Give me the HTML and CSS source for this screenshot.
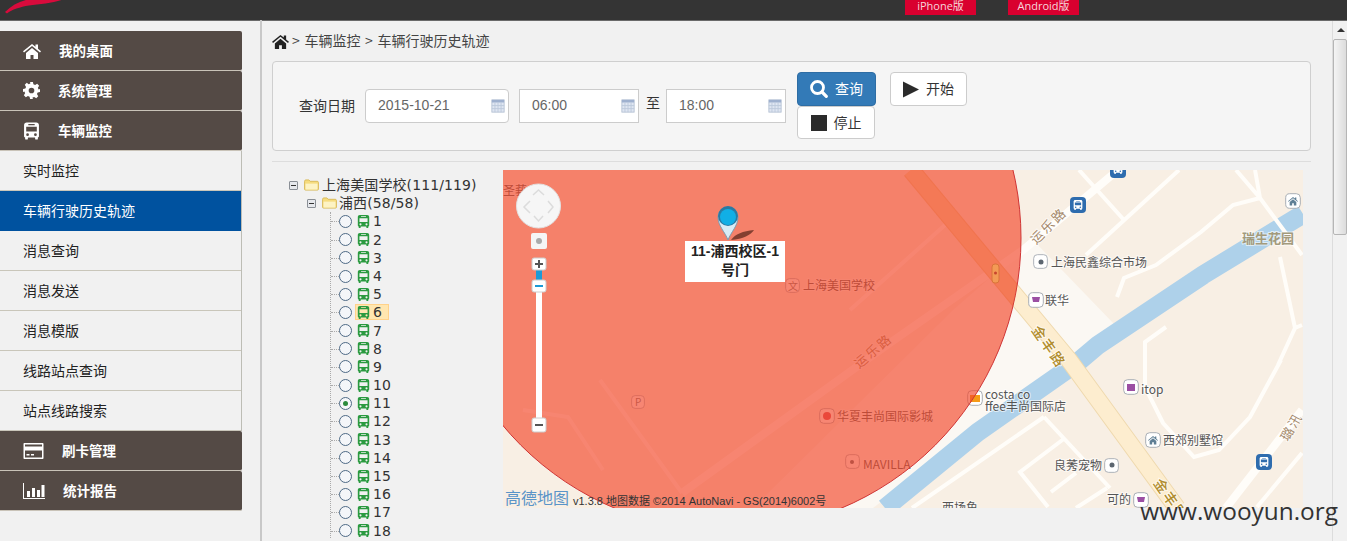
FILE: index.html
```html
<!DOCTYPE html>
<html lang="zh">
<head>
<meta charset="utf-8">
<title>车辆行驶历史轨迹</title>
<link rel="stylesheet" href="styles.css">
</head>
<body>
<svg class="defs" width="0" height="0" aria-hidden="true">
  <symbol id="bus" viewBox="0 0 16 16"><path fill="currentColor" fill-rule="evenodd" d="M3.5 0h9C14 0 15 1 15 2.500V13c0 .6-.4 1-1 1v1.200c0 .5-.3.8-.8.8h-1c-.5 0-.8-.3-.8-.8V14H4.600v1.200c0 .5-.3.8-.8.8h-1c-.5 0-.8-.3-.8-.8V14c-.6 0-1-.4-1-1V2.500C1 1 2 0 3.500 0zM5 1.500v1h6v-1zM3 4v4.500h10V4zM4.300 10.200a1.300 1.300 0 1 0 0 2.600 1.300 1.300 0 0 0 0-2.600zm7.400 0a1.300 1.300 0 1 0 0 2.600 1.300 1.300 0 0 0 0-2.600z"/></symbol>
  <symbol id="home" viewBox="0 0 18 16"><path fill="currentColor" d="M9 1 0 8.300l1 1.200L9 3l8 6.500 1-1.200-3-2.500V1.500h-2.500v2.200zM3 10v6h4.500v-4h3v4H15v-6L9 5z"/></symbol>
  <symbol id="calendar" viewBox="0 0 16 16"><rect x="1" y="1" width="14" height="14" fill="#dfe6f2" stroke="#b4bfd2"/><rect x="1" y="1" width="14" height="3" fill="#9fb1cf"/><path stroke="#bcc8da" d="M4.500 4v11M8 4v11M11.500 4v11M1 7.500h14M1 11h14"/></symbol>
  <symbol id="poi-box" viewBox="0 0 16 16"><rect x=".7" y=".7" width="14.600" height="14.600" rx="4" fill="#fff" stroke="#a9aeb5"/></symbol>
</svg>

<header class="topbar">
  <svg class="logo" viewBox="0 0 66 14" width="66" height="14"><path fill="#d80b3c" d="M5 12C12 5 20 1 30-1h34C55 3 40 4 29 5.500 20 7 12 9.500 7 13.500z"/></svg>
  <a class="app-link">iPhone版</a>
  <a class="app-link">Android版</a>
</header>

<div class="layout">
  <nav class="sidebar">
    <a class="nav-main"><svg class="ico-home"><use href="#home"/></svg><span>我的桌面</span></a>
    <a class="nav-main"><svg class="ico-gear" viewBox="0 0 24 24"><path fill="currentColor" fill-rule="evenodd" d="M10 0h4l.7 3.300 2.400 1 2.900-1.800 2.800 2.800-1.800 2.900 1 2.400L24 10v4l-3.300.7-1 2.400 1.800 2.900-2.800 2.800-2.900-1.800-2.400 1L14 24h-4l-.7-3.300-2.400-1L4 21.500l-2.800-2.800L3 15.800l-1-2.400L0 14v-4l3.300-.7 1-2.400L2.500 4l2.800-2.800L8 3l2.400-1zM12 8a4 4 0 1 0 0 8 4 4 0 0 0 0-8z"/></svg><span>系统管理</span></a>
    <a class="nav-main"><svg class="ico-bus"><use href="#bus"/></svg><span>车辆监控</span></a>
    <div class="nav-sub">
      <a class="sub-item">实时监控</a>
      <a class="sub-item is-active">车辆行驶历史轨迹</a>
      <a class="sub-item">消息查询</a>
      <a class="sub-item">消息发送</a>
      <a class="sub-item">消息模版</a>
      <a class="sub-item">线路站点查询</a>
      <a class="sub-item">站点线路搜索</a>
    </div>
    <a class="nav-main"><svg class="ico-card" viewBox="0 0 20 16"><path fill="currentColor" fill-rule="evenodd" d="M1 0h18c.6 0 1 .4 1 1v14c0 .6-.4 1-1 1H1c-.6 0-1-.4-1-1V1c0-.6.4-1 1-1zm.5 1.500v2h17v-2zm0 6v7h17v-7zM3 11h3v1.500H3zm4.500 0h3v1.500h-3z"/></svg><span>刷卡管理</span></a>
    <a class="nav-main"><svg class="ico-chart" viewBox="0 0 22 16"><path fill="currentColor" d="M0 0h1v15h21v1H0zM4 8h3v6H4zm5-3h3v9H9zm5 2h3v7h-3zm4.500-5h3v12h-3z"/></svg><span>统计报告</span></a>
  </nav>
  <div class="divider"></div>

  <main class="content">
    <div class="crumbs"><svg class="crumb-home"><use href="#home"/></svg><span>&gt; 车辆监控 &gt; 车辆行驶历史轨迹</span></div>

    <section class="query-panel">
      <label class="field-label">查询日期</label>
      <div class="date-input rounded"><span>2015-10-21</span><svg><use href="#calendar"/></svg></div>
      <div class="date-input time"><span>06:00</span><svg><use href="#calendar"/></svg></div>
      <span class="to-label">至</span>
      <div class="date-input time last"><span>18:00</span><svg><use href="#calendar"/></svg></div>
      <div class="btn-stack">
        <button class="btn btn-primary"><svg viewBox="0 0 18 18"><circle cx="7.500" cy="7.500" r="6" fill="none" stroke="#fff" stroke-width="2.800"/><path stroke="#fff" stroke-width="3.200" stroke-linecap="round" d="M12 12l4.300 4.300"/></svg><span>查询</span></button>
        <button class="btn btn-stop"><svg viewBox="0 0 16 16"><rect width="16" height="16" fill="#2b2b2b"/></svg><span>停止</span></button>
      </div>
      <button class="btn btn-start"><svg viewBox="0 0 16 16"><path fill="#2b2b2b" d="M0 0l16 8-16 8z"/></svg><span>开始</span></button>
    </section>

    <hr class="rule">

    <div class="workspace">
      <div class="tree">
        <div class="tree-root"><span class="toggle"></span><svg class="folder" viewBox="0 0 16 13"><path fill="#f6dc7e" stroke="#d8b956" d="M.5 2.500c0-.8.5-1.500 1.300-1.500h3.400l1.300 1.500h7.700c.7 0 1.300.5 1.300 1.200v7.300c0 .6-.5 1-1 1H1.500c-.6 0-1-.4-1-1z"/><path fill="#fdf3c4" d="M1.500 5h13v6.500h-13z"/></svg><span>上海美国学校(111/119)</span></div>
        <div class="tree-branch"><span class="toggle"></span><svg class="folder" viewBox="0 0 16 13"><path fill="#f6dc7e" stroke="#d8b956" d="M.5 2.500c0-.8.5-1.500 1.300-1.500h3.400l1.300 1.500h7.700c.7 0 1.300.5 1.300 1.200v7.300c0 .6-.5 1-1 1H1.500c-.6 0-1-.4-1-1z"/><path fill="#fdf3c4" d="M1.500 5h13v6.500h-13z"/></svg><span>浦西(58/58)</span></div>
        <ul class="bus-list">
          <li><i class="radio"></i><span class="bus-node"><svg><use href="#bus"/></svg>1</span></li>
          <li><i class="radio"></i><span class="bus-node"><svg><use href="#bus"/></svg>2</span></li>
          <li><i class="radio"></i><span class="bus-node"><svg><use href="#bus"/></svg>3</span></li>
          <li><i class="radio"></i><span class="bus-node"><svg><use href="#bus"/></svg>4</span></li>
          <li><i class="radio"></i><span class="bus-node"><svg><use href="#bus"/></svg>5</span></li>
          <li><i class="radio"></i><span class="bus-node is-hover"><svg><use href="#bus"/></svg>6</span></li>
          <li><i class="radio"></i><span class="bus-node"><svg><use href="#bus"/></svg>7</span></li>
          <li><i class="radio"></i><span class="bus-node"><svg><use href="#bus"/></svg>8</span></li>
          <li><i class="radio"></i><span class="bus-node"><svg><use href="#bus"/></svg>9</span></li>
          <li><i class="radio"></i><span class="bus-node"><svg><use href="#bus"/></svg>10</span></li>
          <li><i class="radio is-checked"></i><span class="bus-node"><svg><use href="#bus"/></svg>11</span></li>
          <li><i class="radio"></i><span class="bus-node"><svg><use href="#bus"/></svg>12</span></li>
          <li><i class="radio"></i><span class="bus-node"><svg><use href="#bus"/></svg>13</span></li>
          <li><i class="radio"></i><span class="bus-node"><svg><use href="#bus"/></svg>14</span></li>
          <li><i class="radio"></i><span class="bus-node"><svg><use href="#bus"/></svg>15</span></li>
          <li><i class="radio"></i><span class="bus-node"><svg><use href="#bus"/></svg>16</span></li>
          <li><i class="radio"></i><span class="bus-node"><svg><use href="#bus"/></svg>17</span></li>
          <li><i class="radio"></i><span class="bus-node"><svg><use href="#bus"/></svg>18</span></li>
        </ul>
      </div>

      <div class="map">
        <svg class="map-canvas" viewBox="0 0 800 338" width="800" height="338">
          <defs><clipPath id="circle-clip"><circle cx="225" cy="68" r="293"/></clipPath></defs>
          <rect width="800" height="338" fill="#f8efe4"/>
          <path fill="#fbf8f3" d="M530 70 612 155 370 338H250L450 140z"/>
          <path class="river" d="M800 44 700 105 595 175 575 192 475 262 382 338"/>
          <g class="roads">
            <path d="M576 0 621 50M676 0 583 85M733 0 757 28 799 85M752 0 757 28M757 28 730 35 698 62 653 95 621 108 614 127M777 87 792 158 775 195M799 155 792 158M663 157 642 172 642 217 660 253 691 287 716 280 747 247 778 190M799 283 754 337M541 247 409 338M541 247 607 318M562 268 517 302 545 337M573 303 548 322M604 318 573 338M442 55 347 140M97 210 179 323M20 240 65 247 100 300"/>
            <path class="road-wide" d="M609 5 520 80 384 175 179 323M799 240 723 338"/>
          </g>
          <path class="road-edge" d="M408 0 566 190 674 338"/>
          <path class="road-main" d="M408 0 566 190 674 338"/>
          <g class="lbl">
            <text x="0" y="25" class="red">圣莪</text>
            <text x="300" y="120">上海美国学校</text>
            <text x="548" y="97">上海民鑫综合市场</text>
            <text x="542" y="135">联华</text>
            <text x="638" y="224">itop</text>
            <text x="482" y="229">costa co</text>
            <text x="482" y="241">ffee丰尚国际店</text>
            <text x="334" y="251">华夏丰尚国际影城</text>
            <text x="360" y="299">MAVILLA</text>
            <text x="660" y="275">西郊别墅馆</text>
            <text x="551" y="300">良莠宠物</text>
            <text x="604" y="334">可的</text>
            <text x="439" y="342">西场鱼</text>
            <text class="estate" x="739" y="73">瑞生花园</text>
            <text class="road-name" transform="translate(533 75) rotate(-45)">运乐路</text>
            <text class="road-name" transform="translate(356 199) rotate(-40)">运乐路</text>
            <text class="road-gold" transform="translate(528 160) rotate(55)">金丰路</text>
            <text class="road-gold" transform="translate(650 313) rotate(55)">金丰路</text>
            <text class="road-name" transform="translate(785 272) rotate(-60)">璐汛</text>
          </g>
          <use href="#poi-box" x="530" y="84" width="15" height="15"/><circle cx="538" cy="92" r="2.500" fill="#5c6670"/>
          <use href="#poi-box" x="601" y="288" width="15" height="15"/><circle cx="609" cy="295" r="2.500" fill="#5c6670"/>
          <use href="#poi-box" x="342" y="284" width="15" height="15"/><circle cx="349" cy="292" r="2" fill="#5c6670"/>
          <use href="#poi-box" x="525" y="122" width="16" height="16"/><path fill="#9b4fa3" d="M529 127h8l-1 5h-6z"/>
          <use href="#poi-box" x="620" y="209" width="16" height="16"/><path fill="#9b4fa3" d="M624 214h8v7h-8z"/>
          <use href="#poi-box" x="630" y="322" width="16" height="16"/><path fill="#9b4fa3" d="M634 327h8l-1 5h-6z"/>
          <use href="#poi-box" x="282" y="108" width="15" height="15"/><text class="mini" x="285" y="120">文</text>
          <use href="#poi-box" x="128" y="225" width="14" height="14"/><text class="mini" x="132" y="236">P</text>
          <use href="#poi-box" x="316" y="238" width="16" height="16"/><circle cx="324" cy="246" r="4" fill="#d84a5a"/>
          <use href="#poi-box" x="464" y="220" width="16" height="16"/><path fill="#f59a17" d="M467 225h10v7h-10z"/>
          <g class="poi-bus"><rect x="567" y="27" width="16" height="16" rx="4"/><use href="#bus" x="570" y="30" width="10" height="10"/></g>
          <g class="poi-bus"><rect x="753" y="284" width="16" height="16" rx="4"/><use href="#bus" x="756" y="287" width="10" height="10"/></g>
          <g class="poi-bus"><rect x="607" y="-8" width="16" height="16" rx="4"/><use href="#bus" x="610" y="-6" width="10" height="10"/></g>
          <use href="#poi-box" x="782" y="23" width="16" height="16"/><use href="#home" x="785" y="26" width="10" height="10" class="house"/>
          <use href="#poi-box" x="642" y="262" width="16" height="16"/><use href="#home" x="645" y="265" width="10" height="10" class="house"/>

          <g class="overlay">
            <circle cx="225" cy="68" r="293"/>
          </g>
          <path class="road-tint" clip-path="url(#circle-clip)" d="M408 0 566 190 674 338"/>
          <rect x="489" y="94" width="7" height="19" rx="3" fill="#f39a55" stroke="#d9743a"/><circle cx="492.500" cy="103" r="1.500" fill="#c8452d"/>

          <circle cx="35.500" cy="36" r="22" fill="#f6f6f6" stroke="#e2e2e2"/>
          <path fill="none" stroke="#dcdcdc" stroke-width="1.500" d="M30 25l5.500-5 5.500 5M31 46l4.500 5 4.500-5M27 31l-6 6 6 6M45 31l5 6-5 6"/>
          <rect x="28" y="63" width="16" height="16" rx="2" fill="#f5f5f5"/><circle cx="36" cy="71" r="3" fill="#aaa"/>
          <rect x="33" y="100" width="6" height="150" fill="#fff"/>
          <rect x="33" y="100" width="6" height="12" fill="#1c9ad6"/>
          <g class="zoom-btn"><rect x="29" y="88" width="14" height="12" rx="2"/><path d="M32 94h8M36 90v8"/></g>
          <g class="zoom-btn"><rect x="29" y="110" width="14" height="12" rx="2"/><path d="M32 116h8" class="blue"/></g>
          <g class="zoom-btn"><rect x="29" y="248" width="14" height="14" rx="2"/><path d="M32 255h8"/></g>

          <path fill="#5e2a1e" opacity=".75" d="M228 70c4-6 12-9 23-10-3 5-11 9-23 10z"/>
          <path fill="#d8ecf6" stroke="#7d9bb0" d="M225 70c-3-8-10-14-10-23a10 10 0 0 1 20 0c0 9-7 15-10 23z"/>
          <circle cx="225" cy="46" r="10" fill="#2a7aa3"/><circle cx="225" cy="47" r="8" fill="#11afe6"/>
        </svg>

        <div class="marker-label">11-浦西校区-1<br>号门</div>
        <div class="amap-logo">高德地图</div>
        <div class="copyright">v1.3.8 地图数据 ©2014 AutoNavi - GS(2014)6002号</div>
      </div>
    </div>
  </main>

  <div class="scrollbar"><span class="arrow"></span><span class="thumb"></span></div>
</div>

<div class="watermark">www.wooyun.org</div>
</body>
</html>
```

FILE: styles.css
```css
* { box-sizing: border-box; }
html, body { height: 100%; margin: 0; }
body {
  position: relative;
  display: flex;
  flex-direction: column;
  overflow: hidden;
  background: #f1f1f1;
  color: #333;
  font: 14px "Liberation Sans", "Noto Sans CJK SC", sans-serif;
}
.defs { position: absolute; }

.topbar {
  flex: none;
  display: flex;
  align-items: flex-start;
  gap: 32px;
  height: 21px;
  padding-right: 268px;
  background: #343434;
  border-bottom: 1px solid #6a6a6a;
}
.logo { margin-right: auto; }
.app-link {
  width: 71px;
  height: 15px;
  background: #d9002f;
  color: #f6d6dc;
  font: 11px/11px "Open Sans", "Noto Sans CJK SC", sans-serif;
  text-align: center;
}

.layout { flex: 1; display: flex; min-height: 0; }

.sidebar { flex: none; width: 242px; padding-top: 10px; }
.nav-main {
  display: flex;
  align-items: center;
  gap: 18px;
  height: 40px;
  padding-left: 23px;
  background: #544a45;
  border-bottom: 1px solid #c9c3b8;
  border-radius: 0 2px 2px 0;
  color: #fff;
  font-weight: 700;
  font-family: "Noto Sans CJK SC", sans-serif;
  font-size: 13.500px;
}
.nav-main span { padding-bottom: 2px; }
.nav-main svg { flex: none; }
.ico-home { width: 18px; height: 16px; }
.ico-gear { width: 17px; height: 17px; }
.ico-bus { width: 17px; height: 20px; }
.ico-card { width: 21px; height: 16px; }
.ico-chart { width: 22px; height: 16px; }

.nav-sub { border-right: 1px solid #bdbdb5; }
.sub-item {
  display: flex;
  align-items: center;
  height: 40px;
  padding: 0 0 2px 23px;
  border-bottom: 1px solid #c9c6ba;
  color: #222;
  font-family: "Noto Sans CJK SC", sans-serif;
  font-size: 14px;
}
.sub-item.is-active { background: #00529f; color: #fff; border-bottom-color: #00529f; }

.divider { flex: none; width: 20px; margin-top: -1px; border-right: 2px solid #c8c8c8; }

.content { flex: 1; min-width: 0; padding: 10px 21px 0 10px; }

.crumbs {
  display: flex;
  align-items: center;
  gap: 3px;
  height: 20px;
  color: #444;
  font-family: "Noto Sans CJK SC", sans-serif;
  font-size: 14px;
  word-spacing: 1.500px;
}
.crumbs span { padding-bottom: 2px; }
.crumb-home { width: 17px; height: 15px; color: #222; }

.query-panel {
  display: flex;
  align-items: flex-start;
  height: 90px;
  margin-top: 10px;
  padding: 10px 0 0 26px;
  background: #f5f5f5;
  border: 1px solid #cfcfcf;
  border-radius: 4px;
}
.field-label {
  margin: 23px 10px 0 0;
  font-family: "Noto Sans CJK SC", sans-serif;
  font-size: 14px;
  line-height: 20px;
}
.date-input {
  display: flex;
  align-items: center;
  justify-content: space-between;
  width: 120px;
  height: 34px;
  margin: 17px 10px 0 0;
  padding: 0 3px 0 12px;
  background: #fff;
  border: 1px solid #ccc;
  color: #666;
}
.date-input span { padding-bottom: 2px; }
.date-input.rounded { width: 144px; border-radius: 4px; }
.date-input svg { width: 14px; height: 14px; }
.to-label {
  margin: 21px 6px 0 -3px;
  font-family: "Noto Sans CJK SC", sans-serif;
  font-size: 14px;
  line-height: 18px;
}
.date-input.last { margin-right: 11px; }

.btn-stack { display: flex; flex-direction: column; width: 79px; }
.btn {
  display: inline-flex;
  align-items: center;
  justify-content: center;
  gap: 7px;
  height: 34px;
  padding: 0;
  border: 1px solid #ccc;
  border-radius: 4px;
  background: #fff;
  color: #333;
  font: 14px "Noto Sans CJK SC", sans-serif;
}
.btn span { padding-bottom: 2px; }
.btn svg { width: 18px; height: 18px; }
.btn-primary { background: #337ab7; border-color: #2e6da4; color: #fff; }
.btn-stop { width: 78px; height: 33px; }
.btn-stop svg { width: 16px; height: 16px; }
.btn-start { width: 77px; margin-left: 14px; }
.btn-start svg { width: 16px; height: 17px; }

.rule { height: 0; margin: 10px 0 0; border: 0; border-top: 1px solid #ddd; }

.workspace { display: flex; margin-top: 8px; }

.tree {
  flex: none;
  width: 231px;
  height: 369px;
  padding: 6px 0 0 17px;
  overflow: hidden;
  color: #333;
  font: 14px/18.200px "DejaVu Sans", "Noto Sans CJK SC", sans-serif;
}
.tree-root, .tree-branch { display: flex; align-items: center; height: 18.200px; white-space: nowrap; letter-spacing: .1px; }
.tree-branch { padding-left: 18px; }
.toggle {
  position: relative;
  flex: none;
  width: 9px;
  height: 9px;
  margin-right: 6px;
  background: #e6e8ec;
  border: 1px solid #8a8f96;
  border-radius: 1px;
}
.toggle::after { content: ""; position: absolute; left: 1px; top: 3px; width: 5px; height: 1px; background: #333; }
.folder { flex: none; width: 15px; height: 12px; margin-right: 3px; }
.tree-branch .folder { margin-right: 2px; }

.bus-list { margin: 0 0 0 41px; padding: 0; list-style: none; border-left: 1px dotted #aaa; }
.bus-list li { position: relative; display: flex; align-items: center; height: 18.200px; padding-left: 8px; }
.bus-list li::before { content: ""; position: absolute; left: 0; top: 9px; width: 8px; border-top: 1px dotted #aaa; }
.radio {
  flex: none;
  position: relative;
  width: 13px;
  height: 13px;
  margin-right: 3px;
  background: #f4f6f9;
  border: 1px solid #4e6a86;
  border-radius: 50%;
}
.radio.is-checked::after { content: ""; position: absolute; left: 3px; top: 3px; width: 5px; height: 5px; border-radius: 50%; background: #2a8a3c; }
.bus-node { display: flex; align-items: center; gap: 3px; height: 16px; padding: 0 1px; color: #333; border: 1px solid transparent; }
.bus-node svg { width: 13px; height: 13px; color: #2b9a40; }
.bus-node.is-hover { width: 34px; background: #ffe6b0; border-color: #ffd28a; }

.map { position: relative; flex: none; width: 800px; height: 338px; overflow: hidden; }
.map-canvas { display: block; font-family: "Noto Sans CJK SC", sans-serif; }
.river { fill: none; stroke: #aed1ea; stroke-width: 19; }
.roads path { fill: none; stroke: #fffdf9; stroke-width: 4; }
.roads .road-wide { stroke-width: 8; }
.road-edge { fill: none; stroke: #efd9ae; stroke-width: 18; }
.road-main { fill: none; stroke: #fdedcf; stroke-width: 16; }
.road-tint { fill: none; stroke: #ef6b3c; stroke-opacity: .32; stroke-width: 18; }
.lbl text { font-size: 12px; fill: #555; stroke: #fff; stroke-width: 2px; stroke-opacity: .6; paint-order: stroke; }
.lbl .estate { font-size: 13px; font-weight: 700; fill: #a39a7c; }
.lbl .road-name { font-size: 13px; letter-spacing: 2px; fill: #a4886a; }
.lbl .road-gold { font-size: 14px; letter-spacing: 2px; font-weight: 500; fill: #b08c2c; }
.mini { font-size: 10px; fill: #777; }
.poi-bus rect { fill: #2e6cae; }
.poi-bus use { color: #fff; }
.house { color: #5f7f95; }
.overlay circle { fill: #f3472a; fill-opacity: .66; stroke: #cf3535; stroke-width: 1; }
.zoom-btn rect { fill: #fff; stroke: #ccc; }
.zoom-btn path { fill: none; stroke: #555; stroke-width: 2; }
.zoom-btn .blue { stroke: #1c9ad6; }

.marker-label {
  position: absolute;
  left: 182px;
  top: 71px;
  width: 100px;
  height: 41px;
  padding-top: 1px;
  background: #fff;
  color: #222;
  font: 700 14px/19px "Liberation Sans", "Noto Sans CJK SC", sans-serif;
  text-align: center;
}
.amap-logo {
  position: absolute;
  left: 2px;
  bottom: 2px;
  color: #5a94c8;
  font: 16px/18px "Noto Sans CJK SC", sans-serif;
}
.copyright {
  position: absolute;
  left: 70px;
  bottom: 0;
  color: #333;
  font: 11px/14px "Liberation Sans", "Noto Sans CJK SC", sans-serif;
  white-space: nowrap;
}

.scrollbar { position: relative; flex: none; width: 15px; background: #f1f1f1; border-left: 1px solid #dcdcdc; }
.arrow { position: absolute; left: 4px; top: 7px; border: 4px solid transparent; border-top: 0; border-bottom: 4px solid #333; }
.thumb { position: absolute; left: 0; right: 0; top: 18px; height: 196px; background: linear-gradient(90deg, #f4f4f4, #dcdcdc); border: 1px solid #b5b5b5; border-radius: 2px; }

.watermark {
  position: absolute;
  right: 9px;
  bottom: 15px;
  color: #333;
  font: 24.400px/30px "Open Sans", sans-serif;
}
```
